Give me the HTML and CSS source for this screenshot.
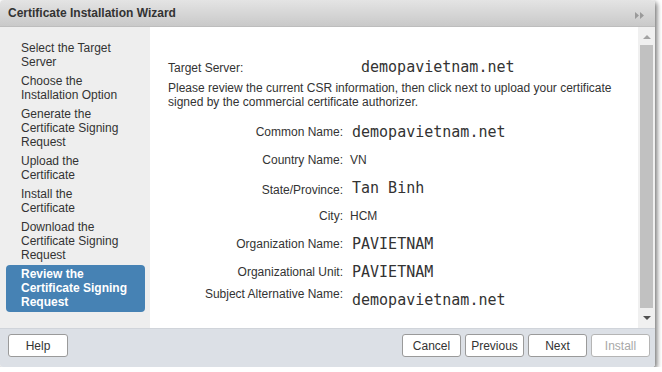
FILE: index.html
```html
<!DOCTYPE html>
<html lang="en">
<head>
    <meta charset="UTF-8">
    <title>Certificate Installation Wizard</title>
    <link rel="stylesheet" href="styles.css">
</head>
<body>
    <div class="wizard">
        <div class="titlebar">
            <span class="title">Certificate Installation Wizard</span>
            <svg class="collapse" width="9" height="7" viewBox="0 0 9 7">
                <path d="M0 0 L4 3.5 L0 7 Z M5 0 L9 3.5 L5 7 Z" fill="#9a9a9a"/>
            </svg>
        </div>

        <div class="main">
            <ul class="steps">
                <li>Select the Target Server</li>
                <li>Choose the Installation Option</li>
                <li>Generate the Certificate Signing Request</li>
                <li>Upload the Certificate</li>
                <li>Install the Certificate</li>
                <li>Download the Certificate Signing Request</li>
                <li class="active">Review the Certificate Signing Request</li>
            </ul>

            <div class="content">
                <div class="target">
                    <span class="target-label">Target Server:</span>
                    <span class="mono">demopavietnam.net</span>
                </div>
                <p class="intro">Please review the current CSR information, then click next to upload your certificate signed by the commercial certificate authorizer.</p>

                <div class="csr">
                    <span class="label">Common Name:</span>
                    <span class="value mono">demopavietnam.net</span>

                    <span class="label">Country Name:</span>
                    <span class="value">VN</span>

                    <span class="label low">State/Province:</span>
                    <span class="value mono">Tan Binh</span>

                    <span class="label">City:</span>
                    <span class="value">HCM</span>

                    <span class="label">Organization Name:</span>
                    <span class="value mono">PAVIETNAM</span>

                    <span class="label">Organizational Unit:</span>
                    <span class="value mono">PAVIETNAM</span>

                    <span class="label top">Subject Alternative Name:</span>
                    <span class="value mono">demopavietnam.net</span>
                </div>
            </div>

            <div class="scrollbar">
                <span class="arrow up"></span>
                <span class="thumb"></span>
                <span class="arrow down"></span>
            </div>
        </div>

        <div class="footer">
            <button class="btn">Help</button>
            <div class="nav">
                <button class="btn">Cancel</button>
                <button class="btn">Previous</button>
                <button class="btn">Next</button>
                <button class="btn" disabled>Install</button>
            </div>
        </div>
    </div>
</body>
</html>
```

FILE: styles.css
```css
body {
    margin: 0;
    background: #ffffff;
    font-family: "Liberation Sans", Arial, sans-serif;
    font-size: 12px;
    color: #333;
}
.wizard {
    width: 655px;
    height: 367px;
    display: flex;
    flex-direction: column;
    background: #fff;
    border-radius: 4px 4px 3px 3px;
    box-shadow: 2px 2px 5px rgba(0,0,0,0.55);
    overflow: hidden;
}
.titlebar {
    height: 27px;
    flex-shrink: 0;
    display: flex;
    align-items: center;
    justify-content: space-between;
    padding: 0 11px 0 8px;
    background: linear-gradient(#e4e4e4, #c9c9c9);
    border-bottom: 1px solid #bdbdbd;
    box-sizing: border-box;
}
.title {
    font-weight: bold;
    color: #333;
}
.collapse {
    margin-top: 4px;
}
.main {
    height: 301px;
    display: flex;
}
.steps {
    list-style: none;
    margin: 0;
    width: 150px;
    flex-shrink: 0;
    padding: 12px 5px 0 6px;
    box-sizing: border-box;
    background: #eeeeee;
    line-height: 14px;
}
.steps li {
    padding: 2px 16px 3px 15px;
    border-radius: 4px;
}
.steps li.active {
    background: #4682b4;
    color: #fff;
    font-weight: bold;
}
.content {
    flex: 1;
    padding: 33px 18px 0 18px;
    line-height: 14px;
}
.target {
    display: flex;
    align-items: baseline;
    height: 14px;
}
.target-label {
    width: 193px;
}
.mono {
    font-family: "DejaVu Sans Mono", monospace;
    font-size: 15px;
    color: #333;
}
.intro {
    margin: 7px 0 0 0;
}
.csr {
    display: grid;
    grid-template-columns: 175px 1fr;
    grid-auto-rows: 28px;
    column-gap: 7px;
    margin-top: 9px;
    align-items: center;
}
.label {
    text-align: right;
}
.label.low {
    padding-top: 4px;
}
.label.top {
    align-self: start;
    padding-top: 1px;
}
.value.mono {
    padding-left: 2px;
}
.scrollbar {
    width: 17px;
    flex-shrink: 0;
    background: #f0f0f0;
    display: flex;
    flex-direction: column;
    align-items: center;
}
.thumb {
    width: 13px;
    height: 263px;
    background: #c1c1c1;
}
.arrow {
    width: 0;
    height: 0;
    border-left: 4px solid transparent;
    border-right: 4px solid transparent;
}
.arrow.up {
    border-bottom: 4px solid #a3a3a3;
    margin: 8px 0 6px;
}
.arrow.down {
    border-top: 4px solid #505050;
    margin: 8px 0 0;
}
.footer {
    flex: 1;
    display: flex;
    justify-content: space-between;
    align-items: flex-start;
    padding: 5px 5px 0 8px;
    background: #dce0e6;
    border-top: 1px solid #d0d4da;
}
.nav {
    display: flex;
    gap: 4px;
}
.btn {
    width: 59px;
    height: 23px;
    padding: 0;
    font-family: "Liberation Sans", Arial, sans-serif;
    font-size: 12px;
    color: #333;
    background: #fff;
    border: 1px solid #9a9a9a;
    border-radius: 3px;
}
.footer > .btn {
    width: 60px;
}
.btn:disabled {
    color: #a8a8a8;
    border-color: #b5b5b5;
}
```
